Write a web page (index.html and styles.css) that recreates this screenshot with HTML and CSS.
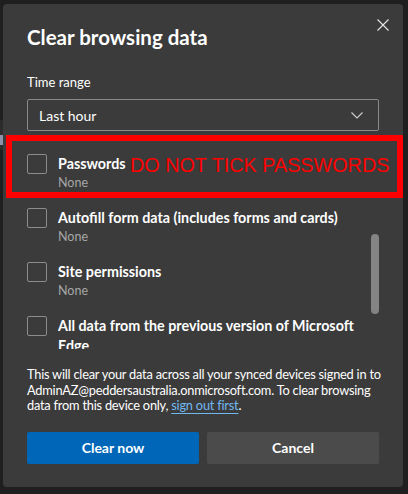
FILE: index.html
```html
<!DOCTYPE html>
<html>
<head>
<meta charset="utf-8">
<title>Clear browsing data</title>
<link rel="stylesheet" href="styles.css">
</head>
<body>
<div class="edge-left"><span class="tab"></span></div>
<div class="dialog">
  <button class="close" aria-label="Close">
    <svg width="12" height="12" viewBox="0 0 12 12"><path d="M0.5 0.5 L11.5 11.5 M11.5 0.5 L0.5 11.5" stroke="#e6e6e6" stroke-width="1.1" fill="none"/></svg>
  </button>

  <h1 class="title">Clear browsing data</h1>

  <div class="field-label">Time range</div>
  <div class="select">
    <span>Last hour</span>
    <svg width="12" height="7" viewBox="0 0 12 7"><path d="M0.5 0.5 L6 6 L11.5 0.5" stroke="#d0d0d0" stroke-width="1.1" fill="none"/></svg>
  </div>

  <div class="list">
    <div class="items">
      <label class="item">
        <span class="box"></span>
        <span class="text"><span class="name">Passwords</span><span class="sub">None</span></span>
      </label>
      <label class="item">
        <span class="box"></span>
        <span class="text"><span class="name">Autofill form data (includes forms and cards)</span><span class="sub">None</span></span>
      </label>
      <label class="item">
        <span class="box"></span>
        <span class="text"><span class="name">Site permissions</span><span class="sub">None</span></span>
      </label>
      <label class="item">
        <span class="box"></span>
        <span class="text"><span class="name">All data from the previous version of Microsoft Edge</span><span class="sub">None</span></span>
      </label>
    </div>
    <div class="track"><div class="thumb"></div></div>
  </div>

  <p class="note">This will clear your data across all your synced devices signed in to AdminAZ@peddersaustralia.onmicrosoft.com. To clear browsing data from this device only, <a href="#">sign out first</a>.</p>

  <div class="actions">
    <button class="btn primary">Clear now</button>
    <button class="btn">Cancel</button>
  </div>
</div>

<div class="warning"><span>DO NOT TICK PASSWORDS</span></div>
</body>
</html>
```

FILE: styles.css
```css
body {
   margin: 0;
   background-color: #1f1f1f;
   font-family: Lato, "Noto Sans", sans-serif;
   color: #ffffff;
   width: 408px;
   height: 494px;
   overflow: hidden;
   position: relative;
}

.edge-left {
   position: absolute;
   left: 0;
   top: 120px;
   width: 3px;
   height: 30px;
   background-color: #2c2c2c;
}

.edge-left .tab {
   display: block;
   margin-top: 15px;
   height: 10px;
   background-color: #8a93a8;
}

.dialog {
   position: relative;
   margin: 4px 0 0 3px;
   width: 400px;
   height: 483px;
   box-sizing: border-box;
   padding: 19px 24px 0 24px;
   background-color: #3b3b3b;
   border-radius: 4px;
}

.close {
   position: absolute;
   top: 15px;
   right: 14px;
   padding: 0;
   border: none;
   background: none;
   line-height: 0;
}

.title {
   margin: 0;
   font-size: 20.5px;
   line-height: 28px;
   font-weight: 700;
}

.field-label {
   margin-top: 21px;
   font-size: 13px;
   line-height: 20px;
}

.select {
   margin-top: 7px;
   height: 32px;
   box-sizing: border-box;
   border: 1px solid #8a8a8a;
   border-radius: 2px;
   padding: 0 15px 0 11px;
   display: flex;
   align-items: center;
   justify-content: space-between;
   font-size: 14px;
}

.list {
   margin-top: 11px;
   height: 207px;
   overflow: hidden;
   display: flex;
}

.items {
   flex: 1;
   padding-top: 12px;
   display: flex;
   flex-direction: column;
   gap: 16px;
}

.item {
   display: flex;
   gap: 11px;
   align-items: flex-start;
}

.box {
   flex: none;
   width: 20px;
   height: 20px;
   box-sizing: border-box;
   border: 1px solid #8c8c8c;
   border-radius: 2px;
}

.text {
   width: 305px;
   display: flex;
   flex-direction: column;
}

.name {
   font-size: 14.3px;
   font-weight: 700;
   line-height: 20px;
}

.sub {
   font-size: 12.5px;
   line-height: 18px;
   color: #a6a6a6;
}

.track {
   flex: none;
   width: 8px;
}

.thumb {
   margin-top: 92px;
   height: 80px;
   border-radius: 4px;
   background-color: #848484;
}

.note {
   margin: 18px -4px 0 0;
   font-size: 12.8px;
   line-height: 15.5px;
   letter-spacing: -0.22px;
}

.note a {
   color: #72b8f0;
   text-decoration: underline;
   text-underline-offset: 3px;
}

.actions {
   margin-top: 18px;
   display: flex;
   gap: 8px;
}

.btn {
   flex: 1;
   height: 32px;
   border: none;
   border-radius: 2px;
   background-color: #4b4b4b;
   color: #ffffff;
   font-family: inherit;
   font-size: 14px;
   font-weight: 700;
}

.btn.primary {
   background-color: #0067b8;
}

.warning {
   position: absolute;
   left: 6px;
   top: 135px;
   width: 397px;
   height: 63px;
   box-sizing: border-box;
   border: 6px solid #ff0000;
}

.warning span {
   position: absolute;
   left: 118px;
   top: 13px;
   font-family: "Liberation Sans", Arial, sans-serif;
   font-size: 19.8px;
   color: #ff0000;
}
```
